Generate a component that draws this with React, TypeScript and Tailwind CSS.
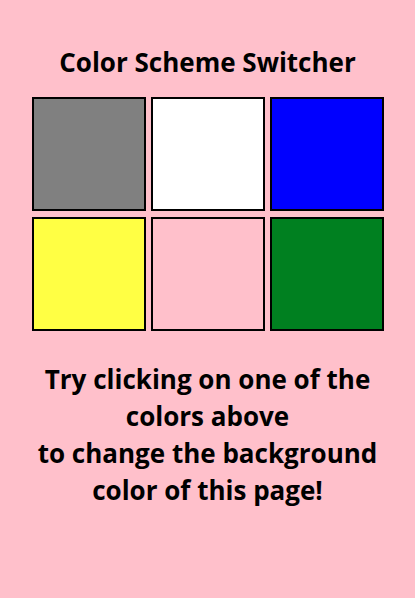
import React, { useState } from 'react';

const colors = ['#808080', '#ffffff', '#0000ff', '#ffff44', '#ffc0cb', '#008020'];

const App = () => {
  const [bg, setBg] = useState('#ffc0cb');

  return (
    <div
      className="min-h-[598px] w-full flex flex-col items-center pt-[44px] text-black"
      style={{ backgroundColor: bg, fontFamily: '"Open Sans", sans-serif' }}
    >
      <h1 className="text-[26px] font-bold leading-[36px]">Color Scheme Switcher</h1>
      <div className="mt-[17px] grid grid-cols-[114px_114px_114px] gap-x-[5px] gap-y-[6px]">
        {colors.map((c) => (
          <button
            key={c}
            className="w-[114px] h-[114px] border-2 border-black cursor-pointer"
            style={{ backgroundColor: c }}
            onClick={() => setBg(c)}
          />
        ))}
      </div>
      <h2 className="mt-[30px] w-[340px] text-center text-[26px] font-bold leading-[37px]">
        Try clicking on one of the colors above
        <br />
        to change the background color of this page!
      </h2>
    </div>
  );
};

export default App;
